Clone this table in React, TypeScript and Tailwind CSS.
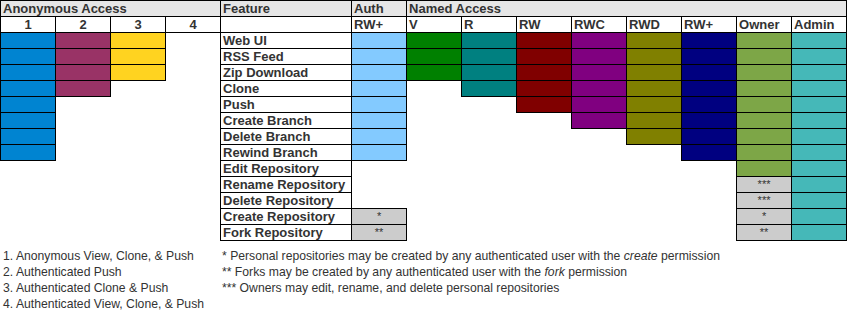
const features = [
  'Web UI',
  'RSS Feed',
  'Zip Download',
  'Clone',
  'Push',
  'Create Branch',
  'Delete Branch',
  'Rewind Branch',
  'Edit Repository',
  'Rename Repository',
  'Delete Repository',
  'Create Repository',
  'Fork Repository',
];

// how many rows (from the top) each column is filled for
const anon = [
  { rows: 8, bg: 'bg-[#0084d1]' },
  { rows: 4, bg: 'bg-[#993366]' },
  { rows: 3, bg: 'bg-[#ffd320]' },
  { rows: 0, bg: '' },
];

const named = [
  { rows: 3, bg: 'bg-[#008000]' },
  { rows: 4, bg: 'bg-[#008080]' },
  { rows: 5, bg: 'bg-[#800000]' },
  { rows: 6, bg: 'bg-[#800080]' },
  { rows: 7, bg: 'bg-[#808000]' },
  { rows: 8, bg: 'bg-[#000080]' },
];

const ownerNotes: Record<number, string> = { 9: '***', 10: '***', 11: '*', 12: '**' };
const authNotes: Record<number, string> = { 11: '*', 12: '**' };

const cell = 'h-[16px] p-0 leading-none';
const filled = 'border border-black';

export default function App() {
  return (
    <div className="w-[847px] h-[316px] bg-white text-[#333] font-['Liberation_Sans',Arial,sans-serif]">
      <table className="table-fixed border-collapse w-[847px] text-[13px] font-bold">
        <colgroup>
          <col className="w-[55px]" />
          <col className="w-[55px]" />
          <col className="w-[55px]" />
          <col className="w-[55px]" />
          <col className="w-[131px]" />
          {Array.from({ length: 9 }).map((_, i) => (
            <col key={i} className="w-[55px]" />
          ))}
        </colgroup>
        <thead>
          <tr className="bg-[#e6e6e6]">
            <th colSpan={4} className={`${cell} ${filled} text-left pl-[2px]`}>
              Anonymous Access
            </th>
            <th className={`${cell} ${filled} text-left pl-[2px]`}>Feature</th>
            <th className={`${cell} ${filled} text-left pl-[2px]`}>Auth</th>
            <th colSpan={8} className={`${cell} ${filled} text-left pl-[2px]`}>
              Named Access
            </th>
          </tr>
          <tr>
            {['1', '2', '3', '4'].map((n) => (
              <th key={n} className={`${cell} ${filled} text-center`}>
                {n}
              </th>
            ))}
            <th className={`${cell} ${filled}`} />
            {['RW+', 'V', 'R', 'RW', 'RWC', 'RWD', 'RW+', 'Owner', 'Admin'].map((h, i) => (
              <th key={i} className={`${cell} ${filled} text-left pl-[2px]`}>
                {h}
              </th>
            ))}
          </tr>
        </thead>
        <tbody>
          {features.map((f, r) => (
            <tr key={f}>
              {anon.map((a, i) => (
                <td key={i} className={`${cell} ${r < a.rows ? `${filled} ${a.bg}` : ''}`} />
              ))}
              <td className={`${cell} ${filled} pl-[2px] whitespace-nowrap`}>{f}</td>
              {r < 8 ? (
                <td className={`${cell} ${filled} bg-[#83caff]`} />
              ) : authNotes[r] ? (
                <td className={`${cell} ${filled} bg-[#cccccc] text-center text-[11px] font-normal`}>
                  {authNotes[r]}
                </td>
              ) : (
                <td className={cell} />
              )}
              {named.map((c, i) => (
                <td key={i} className={`${cell} ${r < c.rows ? `${filled} ${c.bg}` : ''}`} />
              ))}
              {r < 9 ? (
                <td className={`${cell} ${filled} bg-[#7da647]`} />
              ) : (
                <td className={`${cell} ${filled} bg-[#cccccc] text-center text-[11px] font-normal`}>
                  {ownerNotes[r]}
                </td>
              )}
              <td className={`${cell} ${filled} bg-[#45b8b8]`} />
            </tr>
          ))}
        </tbody>
      </table>

      <div className="mt-[7px] flex pl-[3px] text-[12.2px] leading-[16px]">
        <ul className="w-[219px]">
          <li>1. Anonymous View, Clone, &amp; Push</li>
          <li>2. Authenticated Push</li>
          <li>3. Authenticated Clone &amp; Push</li>
          <li>4. Authenticated View, Clone, &amp; Push</li>
        </ul>
        <ul>
          <li>
            * Personal repositories may be created by any authenticated user with the <i>create</i> permission
          </li>
          <li>
            ** Forks may be created by any authenticated user with the <i>fork</i> permission
          </li>
          <li>*** Owners may edit, rename, and delete personal repositories</li>
        </ul>
      </div>
    </div>
  );
}
